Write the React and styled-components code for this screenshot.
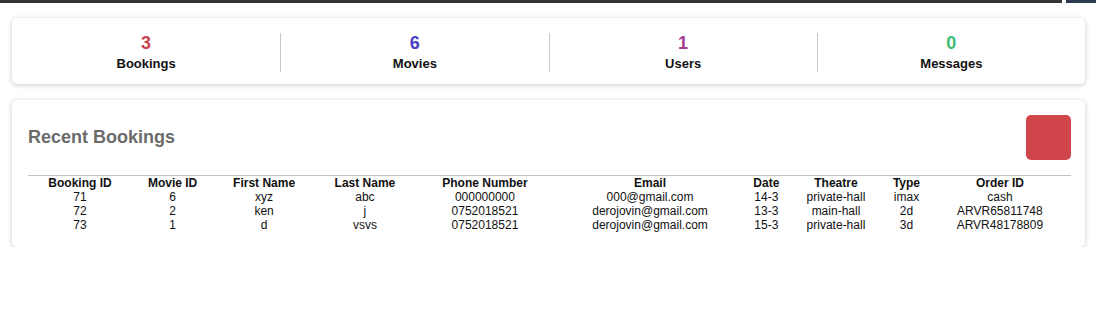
import React from "react";
import styled, { createGlobalStyle } from "styled-components";

const GlobalStyle = createGlobalStyle`
  body {
    margin: 0;
    background: #fff;
    font-family: "Liberation Sans", Arial, sans-serif;
  }
`;

const TopBar = styled.div`
  display: flex;
  gap: 4px;
  height: 3px;
`;

const BarSegment = styled.div`
  flex: ${({ $grow }) => ($grow ? 1 : "none")};
  width: ${({ $width }) => $width || "auto"};
  background: ${({ $color }) => $color};
`;

const Page = styled.div`
  display: flex;
  flex-direction: column;
  gap: 16px;
  padding: 15px 11px 0 12px;
`;

const Card = styled.div`
  background: #fff;
  border-radius: 5px;
  box-shadow: 0 1px 5px rgba(0, 0, 0, 0.22);
`;

const StatsCard = styled(Card)`
  display: grid;
  grid-template-columns: repeat(4, 1fr);
  padding: 15px 0 12px;
`;

const Stat = styled.div`
  display: flex;
  flex-direction: column;
  align-items: center;
  border-left: ${({ $first }) => ($first ? "none" : "1px solid #c8c8c8")};
`;

const StatNumber = styled.span`
  font-size: 18px;
  line-height: 21px;
  font-weight: bold;
  color: ${({ $color }) => $color};
`;

const StatLabel = styled.span`
  font-size: 13px;
  line-height: 17px;
  padding-top: 1px;
  font-weight: bold;
  color: #111;
`;

const BookingsCard = styled(Card)`
  padding: 15px 14px 15px 16px;
`;

const CardHeader = styled.div`
  display: flex;
  align-items: center;
  justify-content: space-between;
  margin-bottom: 15px;
`;

const Title = styled.h2`
  margin: 0;
  font-size: 18px;
  font-weight: bold;
  color: #6b6b6b;
`;

const RedButton = styled.button`
  width: 45px;
  height: 45px;
  border: none;
  border-radius: 5px;
  background: #d1464a;
  cursor: pointer;
`;

const Table = styled.table`
  width: 100%;
  border-collapse: collapse;
  border-top: 1px solid #c4c4c4;
  font-size: 12px;
  color: #111;
`;

const Th = styled.th`
  padding: 0;
  font-weight: bold;
  text-align: center;
`;

const Td = styled.td`
  padding: 0;
  text-align: center;
`;

const stats = [
  { value: 3, label: "Bookings", color: "#c9424c" },
  { value: 6, label: "Movies", color: "#4b40c6" },
  { value: 1, label: "Users", color: "#a23d8f" },
  { value: 0, label: "Messages", color: "#3dba73" },
];

const columns = [
  "Booking ID",
  "Movie ID",
  "First Name",
  "Last Name",
  "Phone Number",
  "Email",
  "Date",
  "Theatre",
  "Type",
  "Order ID",
];

const bookings = [
  ["71", "6", "xyz", "abc", "000000000", "000@gmail.com", "14-3", "private-hall", "imax", "cash"],
  ["72", "2", "ken", "j", "0752018521", "derojovin@gmail.com", "13-3", "main-hall", "2d", "ARVR65811748"],
  ["73", "1", "d", "vsvs", "0752018521", "derojovin@gmail.com", "15-3", "private-hall", "3d", "ARVR48178809"],
];

const App = () => {
  return (
    <>
      <GlobalStyle />
      <TopBar>
        <BarSegment $grow $color="#353535" />
        <BarSegment $width="30px" $color="#2b3a4e" />
      </TopBar>
      <Page>
        <StatsCard>
          {stats.map((s, i) => (
            <Stat key={s.label} $first={i === 0}>
              <StatNumber $color={s.color}>{s.value}</StatNumber>
              <StatLabel>{s.label}</StatLabel>
            </Stat>
          ))}
        </StatsCard>
        <BookingsCard>
          <CardHeader>
            <Title>Recent Bookings</Title>
            <RedButton />
          </CardHeader>
          <Table>
            <thead>
              <tr>
                {columns.map((c) => (
                  <Th key={c}>{c}</Th>
                ))}
              </tr>
            </thead>
            <tbody>
              {bookings.map((row) => (
                <tr key={row[0]}>
                  {row.map((cell, i) => (
                    <Td key={i}>{cell}</Td>
                  ))}
                </tr>
              ))}
            </tbody>
          </Table>
        </BookingsCard>
      </Page>
    </>
  );
};

export default App;
